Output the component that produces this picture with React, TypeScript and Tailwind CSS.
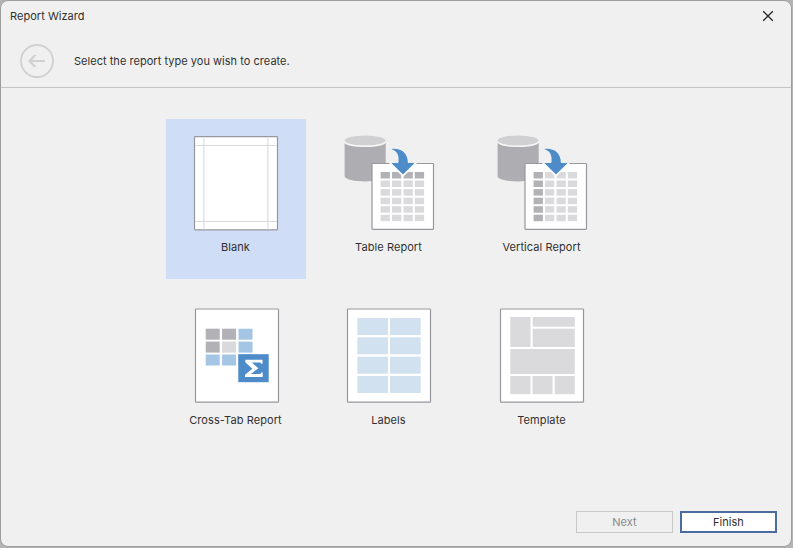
import React from 'react';

const EDGE = '#97979d';
const DARK = '#b1b1b6';
const LIGHT = '#dadadc';

function Page({ x = 28.5, y = 17, w = 83, h = 93.1 }: { x?: number; y?: number; w?: number; h?: number }) {
  return <rect x={x} y={y} width={w} height={h} rx="0.7" fill="#fff" stroke={EDGE} strokeWidth="1.2" />;
}

function BlankIcon() {
  return (
    <>
      <Page y={17.7} />
      <path d="M37.8 18.4V110.3M101.8 18.4V110.3" stroke="#e7e7e8" strokeWidth="1.8" />
      <path d="M29 26.5H111M29 102.5H111" stroke="#d9d9db" strokeWidth="1" />
    </>
  );
}

function DataIcon({ vertical = false }: { vertical?: boolean }) {
  const xs = [61.6, 73, 84.5, 95.8];
  const ys = [53, 61.5, 70.1, 78.7, 87.2, 95.7];
  return (
    <>
      <path d="M25.6 23C28 29.5 64 29.5 66.7 23V57C66.7 64.2 25.6 64.2 25.6 57Z" fill="#adadb2" />
      <ellipse cx="46.1" cy="21.6" rx="20.6" ry="5.2" fill="#d0d0d2" />
      <path d="M25 22C27 29 65 29 67 22" fill="none" stroke="#f5f5f5" strokeWidth="1.3" />
      <Page x={53} y={44.5} w={61.5} h={65.8} />
      {ys.map((y, r) =>
        xs.map((x, c) => (
          <rect key={`${r}-${c}`} x={x} y={y} width="9.3" height="6.5" fill={(vertical ? c === 0 : r === 0) ? DARK : LIGHT} />
        )),
      )}
      <path d="M69 43H99L84 58Z" fill="#fff" />
      <path d="M69 42H99V44H69Z" fill="#f0f0f0" />
      <path d="M72.3 29.9C82.5 28.9 88.9 34 88.9 44H95.7L84 55.5L72.3 44H79.3C80.5 36.5 78.5 32 72.3 29.9Z" fill="#4e8bc9" />
    </>
  );
}

function CrossTabIcon() {
  const fills = [
    [DARK, DARK, '#a5c5e5'],
    [DARK, LIGHT, '#a5c5e5'],
    ['#a5c5e5', '#a5c5e5', '#a5c5e5'],
  ];
  return (
    <>
      <Page x={29.5} />
      {fills.map((row, r) =>
        row.map((fill, c) => (
          <rect key={`${r}-${c}`} x={39.7 + c * 16.4} y={36.7 + r * 12.9} width="14" height="11" fill={fill} />
        )),
      )}
      <rect x="72.3" y="62.2" width="30.4" height="28" fill="#4e8bc9" />
      <path d="M79.3 67.7H96.5V71.8H95.3C95 70.7 94.2 70.5 92.5 70.5H85.8L92.4 76.2L84.8 82.1H92.5C94.2 82.1 95 81.7 95.3 80.5H96.7V85H79V82.8L86.3 76.8L79.3 70.2Z" fill="#fff" />
    </>
  );
}

function LabelsIcon() {
  return (
    <>
      <Page />
      {[26, 45.3, 64.7, 84].map((y) =>
        [38.3, 71].map((x) => <rect key={`${x}-${y}`} x={x} y={y} width="30.7" height="17" fill="#d2e1f0" />),
      )}
    </>
  );
}

function TemplateIcon() {
  const blocks = [
    [38.3, 25, 20.2, 30],
    [60.7, 25, 42.1, 9.7],
    [60.7, 36.7, 42.1, 18.3],
    [38.3, 57, 64.5, 25],
    [38.3, 84, 20.2, 18.2],
    [60.5, 84, 20, 18.2],
    [82.7, 84, 20.1, 18.2],
  ];
  return (
    <>
      <Page />
      {blocks.map(([x, y, w, h]) => (
        <rect key={`${x}-${y}`} x={x} y={y} width={w} height={h} fill={LIGHT} />
      ))}
    </>
  );
}

function Tile({ label, selected = false, children }: { label: string; selected?: boolean; children: React.ReactNode }) {
  return (
    <button className={`flex h-[160px] w-[140px] flex-col items-center ${selected ? 'bg-[#cfddf6]' : ''}`}>
      <svg className="h-[120px] w-[140px] shrink-0" viewBox="0 0 140 120">{children}</svg>
      <span className="mr-px whitespace-nowrap leading-4 tracking-[0.08px]">{label}</span>
    </button>
  );
}

export default function App() {
  return (
    <div className="h-[548px] w-[793px] overflow-hidden bg-[#b4b4b4] font-['Inter',sans-serif] text-[11px] tracking-[0.03px] text-[#303030]">
      <div className="flex h-[547px] w-[792px] flex-col rounded-lg border border-[#9d9d9d] bg-[#f0f0f0]">
        <header className="flex h-[87px] shrink-0 flex-col border-b border-[#c4c4c4]">
          <div className="flex h-[30px] shrink-0 items-center justify-between pl-[9px] pr-[17px]">
            <h1>Report Wizard</h1>
            <button aria-label="Close">
              <svg className="size-3" viewBox="0 0 12 12">
                <path d="M1.2 1.2L10.8 10.8M10.8 1.2L1.2 10.8" stroke="#242424" strokeWidth="1.3" />
              </svg>
            </button>
          </div>
          <div className="flex h-14 shrink-0 items-center pl-[19px] pt-1">
            <svg className="size-[34px]" viewBox="0 0 34 34" fill="none" stroke="#d0d0d0" strokeWidth="1.8">
              <circle cx="17" cy="17" r="16" />
              <path d="M25 17H9.5" strokeWidth="2" />
              <path d="M13.8 11H16.8L11 17L16.8 23H13.8L8 17Z" fill="#d0d0d0" stroke="none" />
            </svg>
            <p className="ml-5">Select the report type you wish to create.</p>
          </div>
        </header>
        <main className="grid grow grid-cols-[repeat(3,140px)] content-start gap-[13px] pl-[165px] pt-[31px]">
          <Tile label="Blank" selected><BlankIcon /></Tile>
          <Tile label="Table Report"><DataIcon /></Tile>
          <Tile label="Vertical Report"><DataIcon vertical /></Tile>
          <Tile label="Cross-Tab Report"><CrossTabIcon /></Tile>
          <Tile label="Labels"><LabelsIcon /></Tile>
          <Tile label="Template"><TemplateIcon /></Tile>
        </main>
        <footer className="flex shrink-0 justify-end gap-[7px] pb-[13px] pr-[14px]">
          <button className="h-[22px] w-[97px] border border-[#c8c8c8] text-[#898989]">Next</button>
          <button className="h-[22px] w-[97px] border-2 border-[#4c6c9f] bg-white">Finish</button>
        </footer>
      </div>
    </div>
  );
}
